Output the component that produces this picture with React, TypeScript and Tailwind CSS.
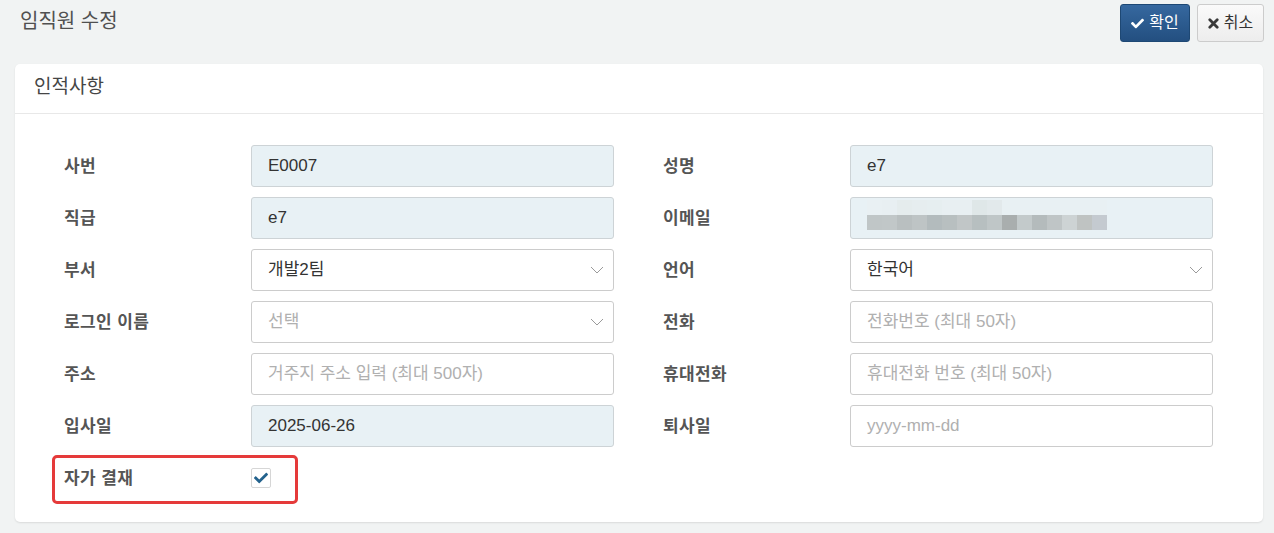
import React from "react";
import { FaCheck } from "react-icons/fa";

const FONT = { fontFamily: '"Liberation Sans", "Noto Sans CJK KR", sans-serif' };

function Label({ children }: { children: React.ReactNode }) {
  return (
    <div className="w-[187px] shrink-0 text-[17px] tracking-[0.4px] font-bold text-[#555] leading-none">{children}</div>
  );
}

function ReadInput({ value }: { value: string }) {
  return (
    <div className="flex-1 h-[42px] flex items-center px-4 rounded-[3px] border border-[#cdd3d6] bg-[#e8f1f5] text-[17px] text-[#333]">
      {value}
    </div>
  );
}

function TextInput({ placeholder }: { placeholder: string }) {
  return (
    <div className="flex-1 h-[42px] flex items-center px-4 rounded-[3px] border border-[#cccccc] bg-white text-[17px] text-[#b0b0b0]">
      {placeholder}
    </div>
  );
}

function SelectInput({ value, placeholder }: { value: string; placeholder?: boolean }) {
  return (
    <div className="flex-1 h-[42px] flex items-center justify-between pl-4 pr-[9px] rounded-[3px] border border-[#cccccc] bg-white text-[17px]">
      <span className={placeholder ? "text-[#b0b0b0]" : "text-[#333]"}>{value}</span>
      <svg width="14" height="8" viewBox="0 0 14 8" fill="none">
        <path d="M1 1 L7 7 L13 1" stroke="#9a9a9a" strokeWidth="1" />
      </svg>
    </div>
  );
}

function Row({ label, children }: { label: string; children: React.ReactNode }) {
  return (
    <div className="flex items-center h-[42px]">
      <Label>{label}</Label>
      {children}
    </div>
  );
}

const blurTop = ["#e9f0f3", "#e8eff2", "#e5eced", "#e6edef", "#e6eef0", "#e8eff2", "#e8eff2", "#dfe7e8", "#e2e9eb", "#e8f0f3", "#e8f0f3", "#e8f0f3", "#e8f0f3", "#e8f0f3", "#e8f0f3", "#e8f0f3"];
const blurMid = ["#c0c6c7", "#c1c7c8", "#b9bfc0", "#bec4c5", "#b3bbbd", "#b8bfc0", "#c1c6c7", "#b7bfc0", "#bfc6c7", "#a9aeae", "#c3cacb", "#b4bbbc", "#bfc5c6", "#cdd3d4", "#bfc3c2", "#c4cad0"];

function EmailInput() {
  return (
    <div className="flex-1 h-[42px] flex flex-col justify-center px-4 rounded-[3px] border border-[#cdd3d6] bg-[#e8f1f5]">
      <div className="flex">
        {blurTop.map((c, i) => (
          <div key={i} className="w-[15px] h-[15px]" style={{ background: c }} />
        ))}
      </div>
      <div className="flex">
        {blurMid.map((c, i) => (
          <div key={i} className="w-[15px] h-[15px]" style={{ background: c }} />
        ))}
      </div>
      <div className="h-[6px]" />
    </div>
  );
}

export default function App() {
  return (
    <div className="w-[1274px] h-[533px] bg-[#f1f3f3] overflow-hidden" style={FONT}>
      <div className="flex items-start justify-between h-[64px] pl-5 pr-[10px] pt-[4px]">
        <div className="text-[20px] text-[#505050] leading-none mt-[7px]">임직원 수정</div>
        <div className="flex gap-[7px]">
          <button className="h-[38px] w-[70px] flex items-center justify-center gap-[5px] rounded-[3px] border border-[#1e4874] bg-gradient-to-b from-[#36689f] to-[#234f80] text-white text-[16px]">
            <FaCheck className="w-[13px] h-[13px]" />
            <span>확인</span>
          </button>
          <button className="h-[38px] w-[67px] flex items-center justify-center gap-[5px] rounded-[3px] border border-[#cccccc] bg-gradient-to-b from-[#fafafa] to-[#ededed] text-[#333] text-[16px]">
            <svg width="11" height="11" viewBox="0 0 11 11">
              <path d="M1.8 1.8 L9.2 9.2 M9.2 1.8 L1.8 9.2" stroke="#3a3a3a" strokeWidth="2.8" strokeLinecap="round" />
            </svg>
            <span>취소</span>
          </button>
        </div>
      </div>
      <div className="mx-[15px] w-[1248px] bg-white rounded-[5px] shadow-[0_1px_2px_rgba(0,0,0,0.1)]">
        <div className="h-[50px] flex items-center pl-[19px] border-b border-[#e8e8e8] text-[19px] text-[#454545] pb-[2px]">
          인적사항
        </div>
        <div className="pl-[49px] pt-[31px] pb-[23px] relative">
          <div className="grid grid-cols-[550px_550px] gap-x-[49px] gap-y-[10px]">
            <Row label="사번"><ReadInput value="E0007" /></Row>
            <Row label="성명"><ReadInput value="e7" /></Row>
            <Row label="직급"><ReadInput value="e7" /></Row>
            <Row label="이메일"><EmailInput /></Row>
            <Row label="부서"><SelectInput value="개발2팀" /></Row>
            <Row label="언어"><SelectInput value="한국어" /></Row>
            <Row label="로그인 이름"><SelectInput value="선택" placeholder /></Row>
            <Row label="전화"><TextInput placeholder="전화번호 (최대 50자)" /></Row>
            <Row label="주소"><TextInput placeholder="거주지 주소 입력 (최대 500자)" /></Row>
            <Row label="휴대전화"><TextInput placeholder="휴대전화 번호 (최대 50자)" /></Row>
            <Row label="입사일"><ReadInput value="2025-06-26" /></Row>
            <Row label="퇴사일"><TextInput placeholder="yyyy-mm-dd" /></Row>
            <div className="flex items-center h-[42px] relative">
              <Label>자가 결재</Label>
              <div className="w-[20px] h-[20px] border border-[#d6d6d6] rounded-[2px] bg-white flex items-center justify-center">
                <FaCheck className="w-[14px] h-[14px] text-[#23628d]" />
              </div>
              <div className="absolute left-[-12px] top-[-2px] w-[246px] h-[49px] border-[3px] border-[#e53a3a] rounded-[5px]" />
            </div>
          </div>
        </div>
      </div>
    </div>
  );
}
